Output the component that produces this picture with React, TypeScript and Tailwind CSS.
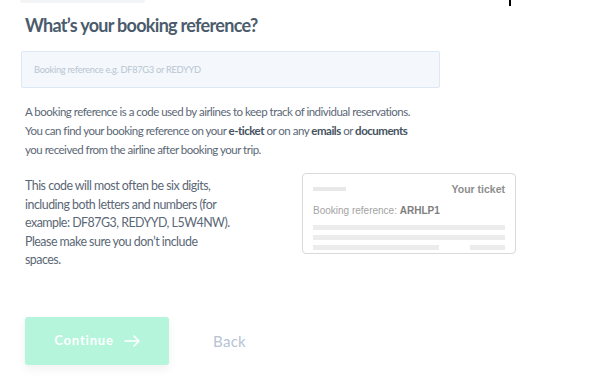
export default function App() {
  return (
    <div className="relative w-[614px] h-[377px] bg-white overflow-hidden font-['Lato',sans-serif]">
      {/* faint top bits */}
      <div className="absolute left-[20px] top-0 w-[125px] h-[3px] bg-[#f3f4f6] rounded-b" />
      <div className="absolute left-[509px] top-0 w-[2px] h-[6px] bg-black" />

      <div className="pl-[25px] pt-[11px] w-[520px]">
        <h1 className="text-[18px] font-bold text-[#4b5b6c] leading-[28px] tracking-[-0.7px]">
          What’s your booking reference?
        </h1>

        <div className="mt-[12px] -ml-[4px] w-[419px] h-[37px] bg-[#f4f8fd] border border-[#dce8f5] rounded-[2px] flex items-center pl-[12px]">
          <span className="text-[9.3px] tracking-[-0.3px] text-[#b9c5d2]">Booking reference e.g. DF87G3 or REDYYD</span>
        </div>

        <p className="mt-[14px] text-[11.5px] tracking-[-0.5px] leading-[19px] text-[#5b6776]">
          A booking reference is a code used by airlines to keep track of individual reservations.
          <br />
          You can find your booking reference on your <b className="text-[#45535f]">e-ticket</b> or on any{" "}
          <b className="text-[#45535f]">emails</b> or <b className="text-[#45535f]">documents</b>
          <br />
          you received from the airline after booking your trip.
        </p>

        <div className="mt-[18px] flex items-start">
          <p className="w-[240px] text-[12.4px] tracking-[-0.5px] leading-[18.6px] text-[#5b6776]">
            This code will most often be six digits,
            <br />
            including both letters and numbers (for
            <br />
            example: DF87G3, REDYYD, L5W4NW).
            <br />
            Please make sure you don’t include
            <br />
            spaces.
          </p>
          <div className="ml-[37px] mt-[-4px] w-[214px] h-[81px] border border-[#d9d9d9] rounded-[4px] px-[10px] pt-[9px] font-['Liberation_Sans',sans-serif]">
            <div className="flex items-center justify-between">
              <div className="w-[33px] h-[4px] bg-[#e8e8e8]" />
              <span className="text-[10.5px] font-bold text-[#8d8d8d] leading-[12px]">Your ticket</span>
            </div>
            <div className="mt-[10px] text-[10px] leading-[12px] text-[#a3a3a3]">
              Booking reference: <b className="text-[#7e7e7e]">ARHLP1</b>
            </div>
            <div className="mt-[8px] h-[5px] bg-[#ececec]" />
            <div className="mt-[5px] h-[5px] bg-[#ececec]" />
            <div className="mt-[5px] flex justify-between">
              <div className="w-[126px] h-[5px] bg-[#ececec]" />
              <div className="w-[35px] h-[5px] bg-[#ececec]" />
            </div>
          </div>
        </div>

        <div className="mt-[47px] flex items-center">
          <button className="w-[144px] h-[48px] rounded-[3px] bg-[#b4f5dc] shadow-[0_4px_10px_rgba(0,0,0,0.06)] flex items-center justify-center gap-[10px] text-white text-[13px] font-bold tracking-[0.8px]">
            Continue
            <svg width="16" height="12" viewBox="0 0 16 12" fill="none" stroke="white" strokeWidth="1.6" strokeLinecap="round" strokeLinejoin="round">
              <path d="M1 6h14M10 1l5 5-5 5" />
            </svg>
          </button>
          <span className="ml-[44px] text-[15px] text-[#b6c3d4] tracking-[0.3px]">Back</span>
        </div>
      </div>
    </div>
  );
}
